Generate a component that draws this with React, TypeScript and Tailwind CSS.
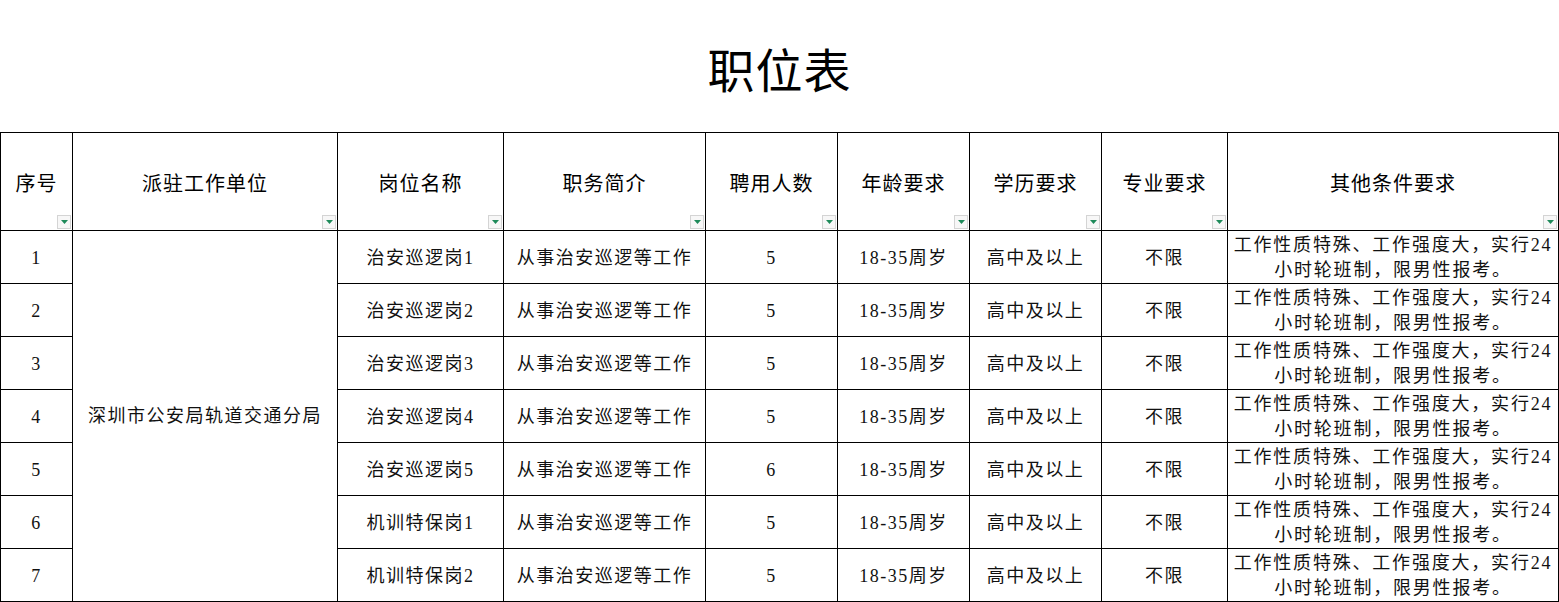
import React from "react";

const COLS = [72, 265, 166, 202, 132, 132, 132, 126, 331];
const HEADERS = ["序号", "派驻工作单位", "岗位名称", "职务简介", "聘用人数", "年龄要求", "学历要求", "专业要求", "其他条件要求"];

const ROWS = [
  { no: "1", post: "治安巡逻岗1", count: "5" },
  { no: "2", post: "治安巡逻岗2", count: "5" },
  { no: "3", post: "治安巡逻岗3", count: "5" },
  { no: "4", post: "治安巡逻岗4", count: "5" },
  { no: "5", post: "治安巡逻岗5", count: "6" },
  { no: "6", post: "机训特保岗1", count: "5" },
  { no: "7", post: "机训特保岗2", count: "5" },
];

const SERIF = "font-['Liberation_Serif','Noto_Sans_CJK_SC',serif]";

function FilterButton() {
  return (
    <span className="absolute right-[1px] bottom-[1px] flex h-[14px] w-[14px] items-center justify-center border border-[#d4d4d4] bg-[#f7f7f7]">
      <svg width="7" height="4" viewBox="0 0 7 4">
        <path d="M0 0h7L3.5 4z" fill="#1e8a5a" />
      </svg>
    </span>
  );
}

export default function App() {
  return (
    <div className="w-[1559px] h-[602px] overflow-hidden bg-white text-black">
      <div className="flex h-[132px] items-center justify-center pt-[12px]">
        <h1 className={`text-[47px] tracking-[1px] ${SERIF}`}>职位表</h1>
      </div>
      <table className="table-fixed border-collapse">
        <colgroup>
          {COLS.map((w, i) => (
            <col key={i} style={{ width: w }} />
          ))}
        </colgroup>
        <thead>
          <tr className="h-[98px]">
            {HEADERS.map((h) => (
              <th
                key={h}
                className="relative border border-black p-0 pt-[2px] text-center text-[20px] font-normal tracking-[1px] font-['Noto_Sans_CJK_SC',sans-serif]"
              >
                {h}
                <FilterButton />
              </th>
            ))}
          </tr>
        </thead>
        <tbody className={`text-[18px] tracking-[1.5px] text-[#111] ${SERIF}`}>
          {ROWS.map((r, i) => (
            <tr key={r.no} className="h-[53px]">
              <td className="border border-black p-0 pt-[2px] text-center">{r.no}</td>
              {i === 0 && (
                <td rowSpan={7} className="border border-black p-0 text-center">
                  深圳市公安局轨道交通分局
                </td>
              )}
              <td className="border border-black p-0 pt-[2px] text-center">{r.post}</td>
              <td className="border border-black p-0 pt-[2px] text-center">从事治安巡逻等工作</td>
              <td className="border border-black p-0 pt-[2px] text-center">{r.count}</td>
              <td className="border border-black p-0 pt-[2px] text-center">18-35周岁</td>
              <td className="border border-black p-0 pt-[2px] text-center">高中及以上</td>
              <td className="border border-black p-0 pt-[2px] text-center">不限</td>
              <td className="border border-black p-0 pt-[2px] text-center leading-[25px] tracking-[1.8px]">
                工作性质特殊、工作强度大，实行24
                <br />
                小时轮班制，限男性报考。
              </td>
            </tr>
          ))}
        </tbody>
      </table>
    </div>
  );
}
